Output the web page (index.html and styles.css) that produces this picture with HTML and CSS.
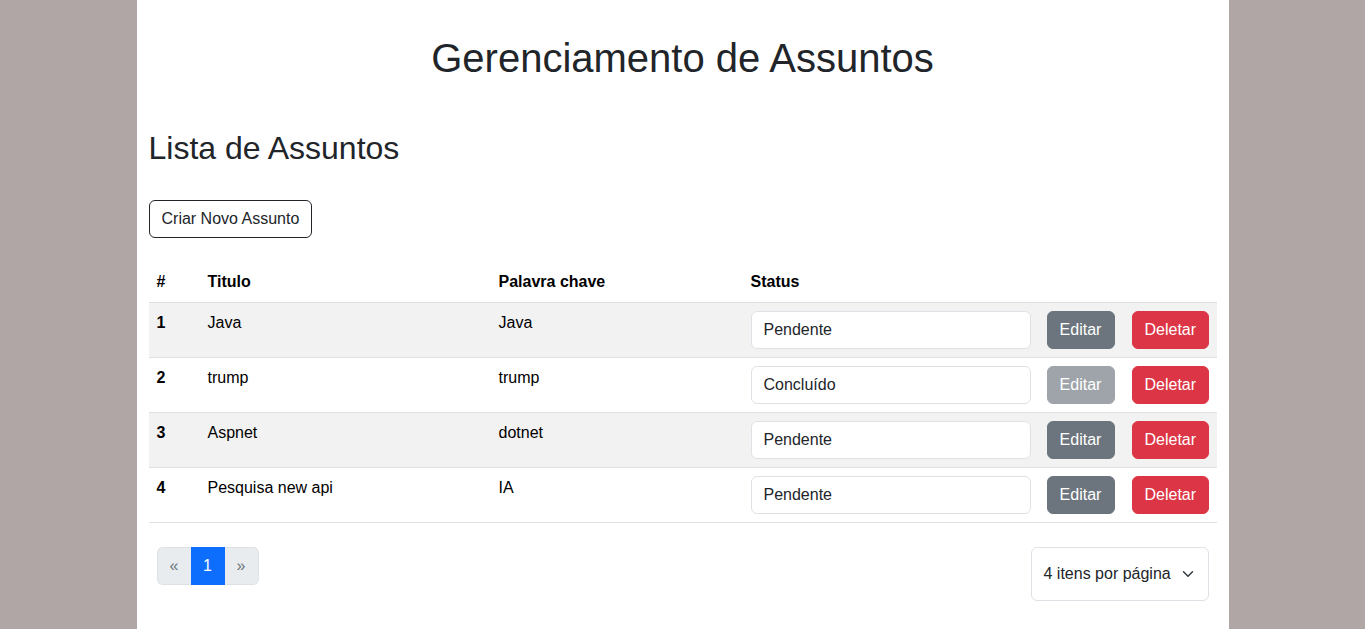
FILE: index.html
```html
<!DOCTYPE html>
<html lang="pt-BR">
<head>
<meta charset="utf-8">
<title>Gerenciamento de Assuntos</title>
<link rel="stylesheet" href="styles.css">
</head>
<body>
<div class="page">
  <h1 class="title">Gerenciamento de Assuntos</h1>
  <h2 class="subtitle">Lista de Assuntos</h2>
  <button class="btn btn-outline">Criar Novo Assunto</button>
  <table class="grid">
    <thead>
      <tr>
        <th class="c-num">#</th>
        <th class="c-title">Titulo</th>
        <th class="c-key">Palavra chave</th>
        <th class="c-status">Status</th>
        <th class="c-edit"></th>
        <th class="c-del"></th>
      </tr>
    </thead>
    <tbody>
      <tr class="odd">
        <th>1</th><td>Java</td><td>Java</td>
        <td><div class="status">Pendente</div></td>
        <td><button class="btn btn-gray">Editar</button></td>
        <td><button class="btn btn-red">Deletar</button></td>
      </tr>
      <tr>
        <th>2</th><td>trump</td><td>trump</td>
        <td><div class="status">Concluído</div></td>
        <td><button class="btn btn-gray is-disabled">Editar</button></td>
        <td><button class="btn btn-red">Deletar</button></td>
      </tr>
      <tr class="odd">
        <th>3</th><td>Aspnet</td><td>dotnet</td>
        <td><div class="status">Pendente</div></td>
        <td><button class="btn btn-gray">Editar</button></td>
        <td><button class="btn btn-red">Deletar</button></td>
      </tr>
      <tr>
        <th>4</th><td>Pesquisa new api</td><td>IA</td>
        <td><div class="status">Pendente</div></td>
        <td><button class="btn btn-gray">Editar</button></td>
        <td><button class="btn btn-red">Deletar</button></td>
      </tr>
    </tbody>
  </table>
  <div class="footer">
    <ul class="pager">
      <li class="pg pg-off pg-first">&laquo;</li>
      <li class="pg pg-on">1</li>
      <li class="pg pg-off pg-last">&raquo;</li>
    </ul>
    <div class="per-page">
      <span>4 itens por página</span>
      <svg class="chev" width="16" height="12" viewBox="0 0 16 16"><path d="M2 5l6 6 6-6" fill="none" stroke="#343a40" stroke-width="2" stroke-linecap="round" stroke-linejoin="round"/></svg>
    </div>
  </div>
</div>
</body>
</html>
```

FILE: styles.css
```css
* { box-sizing: border-box; }
html, body { margin: 0; height: 100%; }
body {
  background: #b0a6a5;
  font-family: "Liberation Sans", Arial, sans-serif;
  font-size: 16px;
  line-height: 1.5;
  color: #212529;
}
.page {
  width: 80%;
  margin: 0 auto;
  background: #fff;
  min-height: 100%;
  padding: 34px 12px 20px;
}
.title {
  margin: 0;
  font-size: 40px;
  line-height: 48px;
  font-weight: 400;
  text-align: center;
}
.subtitle {
  margin: 47px 0 33px;
  font-size: 32px;
  line-height: 38px;
  font-weight: 400;
}
.btn {
  display: inline-block;
  font-family: inherit;
  font-size: 16px;
  line-height: 24px;
  padding: 6px 12px;
  border: 1px solid transparent;
  border-radius: 6px;
  background: transparent;
  color: #212529;
  cursor: pointer;
  text-align: center;
}
.btn-outline { border-color: #212529; }
.btn-gray { width: 68px; background: #6c757d; border-color: #6c757d; color: #fff; }
.btn-gray.is-disabled { opacity: .65; }
.btn-red { width: 77px; background: #dc3545; border-color: #dc3545; color: #fff; }
.grid {
  width: 100%;
  margin-top: 24px;
  border-collapse: collapse;
  table-layout: fixed;
  color: #000;
}
.grid th, .grid td {
  padding: 8px;
  text-align: left;
  vertical-align: top;
  border-bottom: 1px solid #dee2e6;
}
.grid th { font-weight: 700; }
.grid thead th { border-bottom-color: #dcdfe3; }
.grid tr.odd th, .grid tr.odd td { background: #f2f2f2; }
.c-num { width: 51px; }
.c-title { width: 291px; }
.c-key { width: 252px; }
.c-status { width: 296px; }
.c-edit { width: 85px; }
.c-del { width: 93px; }
.status {
  width: 280px;
  height: 38px;
  padding: 6px 12px;
  border: 1px solid #dee2e6;
  border-radius: 6px;
  background: #fff;
  color: #212529;
}
.footer {
  margin-top: 16px;
  padding: 8px;
  display: flex;
  justify-content: space-between;
  align-items: flex-start;
}
.pager {
  list-style: none;
  margin: 0;
  padding: 0;
  display: flex;
}
.pg {
  width: 34px;
  height: 38px;
  line-height: 24px;
  padding: 6px 0;
  text-align: center;
  border: 1px solid #dee2e6;
}
.pg-off { background: #e9ecef; color: #6c757d; }
.pg-first { border-right: 0; border-radius: 6px 0 0 6px; }
.pg-last { border-left: 0; border-radius: 0 6px 6px 0; }
.pg-on { background: #0d6efd; border-color: #0d6efd; color: #fff; }
.per-page {
  width: 178px;
  height: 54px;
  padding: 14px 12px;
  border: 1px solid #dee2e6;
  border-radius: 6px;
  display: flex;
  align-items: center;
  justify-content: space-between;
  color: #212529;
}
```
